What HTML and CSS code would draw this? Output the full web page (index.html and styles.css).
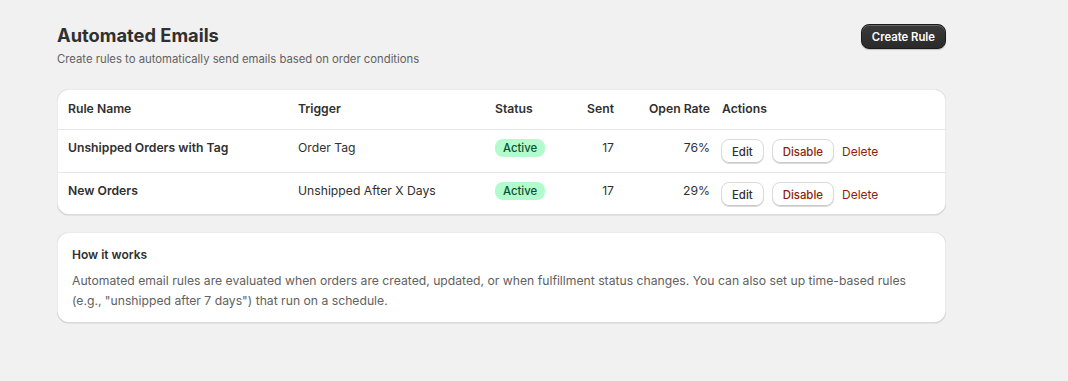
FILE: index.html
```html
<!DOCTYPE html>
<html lang="en">

<head>
    <meta charset="UTF-8">
    <title>Automated Emails</title>
    <meta name="viewport" content="width=device-width, initial-scale=1.0">
    <link rel="stylesheet" href="styles.css">
</head>

<body>
    <div class="page">
        <div class="page-header">
            <div>
                <h1 class="title">Automated Emails</h1>
                <p class="subtitle">Create rules to automatically send emails based on order conditions</p>
            </div>
            <button class="btn btn-primary">Create Rule</button>
        </div>

        <!-- Rules table -->
        <div class="card rules">
            <div class="row row-head">
                <div class="cell">Rule Name</div>
                <div class="cell">Trigger</div>
                <div class="cell">Status</div>
                <div class="cell num">Sent</div>
                <div class="cell num">Open Rate</div>
                <div class="cell">Actions</div>
            </div>
            <div class="row">
                <div class="cell name">Unshipped Orders with Tag</div>
                <div class="cell">Order Tag</div>
                <div class="cell"><span class="badge">Active</span></div>
                <div class="cell num">17</div>
                <div class="cell num">76%</div>
                <div class="cell actions">
                    <button class="btn">Edit</button>
                    <button class="btn btn-danger">Disable</button>
                    <button class="btn-plain">Delete</button>
                </div>
            </div>
            <div class="row">
                <div class="cell name">New Orders</div>
                <div class="cell">Unshipped After X Days</div>
                <div class="cell"><span class="badge">Active</span></div>
                <div class="cell num">17</div>
                <div class="cell num">29%</div>
                <div class="cell actions">
                    <button class="btn">Edit</button>
                    <button class="btn btn-danger">Disable</button>
                    <button class="btn-plain">Delete</button>
                </div>
            </div>
        </div>

        <div class="card info">
            <div class="info-title">How it works</div>
            <p class="info-text">Automated email rules are evaluated when orders are created, updated, or when fulfillment status changes. You can also set up time-based rules (e.g., "unshipped after 7 days") that run on a schedule.</p>
        </div>
    </div>
</body>

</html>
```

FILE: styles.css
```css
body {
    background: #f1f1f1;
    color: #303030;
    font-family: 'Inter', 'Liberation Sans', sans-serif;
    font-size: 12.2px;
    margin: 0;
    padding: 0;
}

.page {
    width: 889px;
    padding: 23px 0 40px 57px;
}

.page-header {
    display: flex;
    justify-content: space-between;
    align-items: flex-start;
    margin-bottom: 20px;
}

.title {
    font-size: 18.3px;
    line-height: 24px;
    font-weight: 700;
    margin: 0;
}

.subtitle {
    color: #616161;
    font-size: 11.3px;
    line-height: 20px;
    margin: 2px 0 0 0;
}

/* Buttons */
.btn {
    font-family: inherit;
    font-size: 11.4px;
    font-weight: 500;
    height: 25px;
    padding: 0 10px;
    border-radius: 8px;
    border: 1px solid #dadada;
    background: #fff;
    color: #303030;
    box-shadow: inset 0 -1px 0 #c9c9c9;
    cursor: pointer;
}

.btn-primary {
    margin-top: 1px;
    padding: 0 10px;
    font-size: 11.3px;
    font-weight: 600;
    color: #fff;
    background: linear-gradient(180deg, #3a3a3a 0%, #2a2a2a 100%);
    border: 1px solid #1a1a1a;
    box-shadow: inset 0 1px 0 rgba(255, 255, 255, 0.22), 0 1px 1px rgba(0, 0, 0, 0.2);
}

.btn-danger {
    color: #8e1f0b;
}

.btn-plain {
    font-family: inherit;
    font-size: 12px;
    font-weight: 400;
    height: 25px;
    padding: 0;
    border: 0;
    background: none;
    color: #8e1f0b;
    cursor: pointer;
}

/* Cards */
.card {
    background: #fff;
    border-radius: 12px;
    box-shadow: 0 1px 0 rgba(26, 26, 26, 0.07),
        inset 0 -1px 0 rgba(0, 0, 0, 0.14),
        inset 1px 0 0 rgba(0, 0, 0, 0.08),
        inset -1px 0 0 rgba(0, 0, 0, 0.08),
        inset 0 1px 0 rgba(204, 204, 204, 0.4);
}

.rules {
    margin-bottom: 17px;
}

.row {
    display: grid;
    grid-template-columns: 230px 197px 71px 60px 96px 1fr;
    padding: 0 5px;
    align-items: start;
    border-top: 1px solid #e6e6e6;
}

.row-head {
    border-top: 0;
    font-weight: 600;
}

.cell {
    padding: 8px 6px;
    line-height: 20px;
}

.row-head .cell {
    padding: 10px 6px;
}

.cell.name {
    font-weight: 600;
}

.cell.num {
    text-align: right;
}

.actions {
    display: flex;
    align-items: center;
    gap: 8px;
    padding: 9px 6px 8px 5px;
}

.badge {
    display: inline-block;
    margin-top: 1px;
    padding: 1px 8px;
    font-size: 11.3px;
    line-height: 16px;
    font-weight: 500;
    border-radius: 8px;
    background: #b2fbcc;
    color: #0c5132;
}

/* How it works */
.info {
    padding: 14px 16px 13px 15px;
}

.info-title {
    font-size: 12px;
    font-weight: 600;
    line-height: 18px;
    margin-bottom: 7px;
}

.info-text {
    color: #616161;
    line-height: 19.5px;
    margin: 0;
}
```
